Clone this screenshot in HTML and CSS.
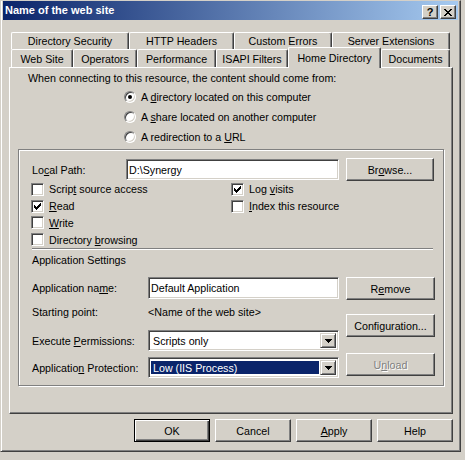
FILE: index.html
```html
<!DOCTYPE html>
<html>
<head>
<meta charset="utf-8">
<title>Name of the web site</title>
<link rel="stylesheet" href="styles.css">
</head>
<body>
<div class="window">
  <div class="titlebar">
    <span class="title">Name of the web site</span>
    <div class="tbtns">
      <span class="tbtn help">?</span>
      <span class="tbtn close"><svg width="8" height="7" viewBox="0 0 8 7" shape-rendering="crispEdges"><path d="M0 0h2v1h1v1h2v-1h1v-1h2v1h-1v1h-1v1h-1v1h1v1h1v1h1v1h-2v-1h-1v-1h-2v1h-1v1h-2v-1h1v-1h1v-1h1v-1h-1v-1h-1v-1h-1z" fill="#000"/></svg></span>
    </div>
  </div>
  <div class="client">
    <div class="tabctl">
      <div class="tabrow r1">
        <div class="tab t-dirsec">Directory Security</div>
        <div class="tab t-http">HTTP Headers</div>
        <div class="tab t-errors">Custom Errors</div>
        <div class="tab t-ext">Server Extensions</div>
      </div>
      <div class="tabrow r2">
        <div class="tab t-site">Web Site</div>
        <div class="tab t-ops">Operators</div>
        <div class="tab t-perf">Performance</div>
        <div class="tab t-isapi">ISAPI Filters</div>
        <div class="tab t-home selected">Home Directory</div>
        <div class="tab t-docs">Documents</div>
      </div>
      <div class="panel">
        <div class="intro">When connecting to this resource, the content should come from:</div>
        <div class="radios">
          <div class="radio-row"><span class="radio on"></span><span>A <u>d</u>irectory located on this computer</span></div>
          <div class="radio-row"><span class="radio"></span><span>A <u>s</u>hare located on another computer</span></div>
          <div class="radio-row"><span class="radio"></span><span>A redirection to a <u>U</u>RL</span></div>
        </div>
        <div class="group">
          <div class="lp-row">
            <span class="lp-label">Lo<u>c</u>al Path:</span>
            <div class="field lp-field">D:\Synergy</div>
            <div class="btn browse">Br<u>o</u>wse...</div>
          </div>
          <div class="checks">
            <div class="chk-item"><span class="chk"></span><span>Scrip<u>t</u> source access</span></div>
            <div class="chk-item"><span class="chk"><svg width="13" height="13" viewBox="0 0 13 13" shape-rendering="crispEdges"><path d="M3 5H4V6H5V7H6V6H7V5H8V4H9V3H10V6H9V7H8V8H7V9H6V10H5V9H4V8H3Z" fill="#000"/></svg></span><span>Log <u>v</u>isits</span></div>
            <div class="chk-item"><span class="chk"><svg width="13" height="13" viewBox="0 0 13 13" shape-rendering="crispEdges"><path d="M3 5H4V6H5V7H6V6H7V5H8V4H9V3H10V6H9V7H8V8H7V9H6V10H5V9H4V8H3Z" fill="#000"/></svg></span><span><u>R</u>ead</span></div>
            <div class="chk-item"><span class="chk"></span><span><u>I</u>ndex this resource</span></div>
            <div class="chk-item"><span class="chk"></span><span><u>W</u>rite</span></div>
            <div class="chk-item"></div>
            <div class="chk-item"><span class="chk"></span><span>Directory <u>b</u>rowsing</span></div>
            <div class="chk-item"></div>
          </div>
          <div class="sep"></div>
          <div class="app-title">Application Settings</div>
          <div class="app">
            <div class="app-left">
              <div class="arow ra">
                <span class="alabel">Application na<u>m</u>e:</span>
                <div class="field afield">Default Application</div>
              </div>
              <div class="arow rb">
                <span class="alabel">Starting point:</span>
                <span class="aval">&lt;Name of the web site&gt;</span>
              </div>
              <div class="arow rc">
                <span class="alabel">Execute <u>P</u>ermissions:</span>
                <div class="field combo"><span class="cval">Scripts only</span><span class="dd"><svg width="7" height="4" viewBox="0 0 7 4" shape-rendering="crispEdges"><path d="M0 0h7v1h-1v1h-1v1h-1v1h-1v-1h-1v-1h-1v-1h-1z" fill="#000"/></svg></span></div>
              </div>
              <div class="arow rd">
                <span class="alabel">Applicatio<u>n</u> Protection:</span>
                <div class="field combo"><span class="cval sel">Low (IIS Process)</span><span class="dd"><svg width="7" height="4" viewBox="0 0 7 4" shape-rendering="crispEdges"><path d="M0 0h7v1h-1v1h-1v1h-1v1h-1v-1h-1v-1h-1v-1h-1z" fill="#000"/></svg></span></div>
              </div>
            </div>
            <div class="app-right">
              <div class="btn abtn">R<u>e</u>move</div>
              <div class="btn abtn config">Configuration...</div>
              <div class="btn abtn unload disabled">U<u>n</u>load</div>
            </div>
          </div>
        </div>
      </div>
      <div class="buttons">
        <div class="btn dlg default">OK</div>
        <div class="btn dlg">Cancel</div>
        <div class="btn dlg"><u>A</u>pply</div>
        <div class="btn dlg">Help</div>
      </div>
    </div>
  </div>
</div>
</body>
</html>
```
FILE: styles.css
```css
* { box-sizing: border-box; }

body {
  margin: 0;
  background: #d4d0c8;
  font: 10.7px "Liberation Sans", Arial, sans-serif;
  color: #000;
}

u { text-underline-offset: 1px; }

.window {
  width: 461px;
  height: 452px;
  border-style: solid;
  border-width: 1px;
  border-color: #d4d0c8 #404040 #404040 #d4d0c8;
  box-shadow: inset 1px 0 #fff, inset -1px -1px #808080;
  padding: 0 2px;
  background: #d4d0c8;
}

.titlebar {
  height: 19px;
  display: flex;
  justify-content: space-between;
  align-items: flex-start;
  background: linear-gradient(to right, #0a246a, #a6caf0);
  color: #fff;
  font-weight: bold;
  font-size: 11px;
}

.title {
  padding-left: 2px;
  line-height: 19px;
}

.tbtns {
  display: flex;
  gap: 2px;
  margin-top: 4px;
  margin-right: 2px;
}

.tbtn {
  width: 16px;
  height: 14px;
  background: #d4d0c8;
  border: 1px solid;
  border-color: #fff #404040 #404040 #fff;
  box-shadow: inset -1px -1px #808080;
  display: flex;
  align-items: center;
  justify-content: center;
  color: #000;
  font-weight: bold;
  font-size: 11px;
  line-height: 1;
}

.tbtn svg { display: block; }

.client {
  padding: 12px 0 0 6px;
}

.tabctl { width: 444px; }

.tabrow {
  display: flex;
  padding-left: 2px;
}

.r1 { height: 17px; }
.r2 { height: 18px; }

.tab {
  height: 100%;
  background: #d4d0c8;
  border-top: 1px solid #fff;
  border-left: 1px solid #fff;
  border-right: 1px solid #404040;
  box-shadow: inset -1px 0 #808080;
  border-radius: 2px 2px 0 0;
  display: flex;
  align-items: center;
  justify-content: center;
  white-space: nowrap;
}

.r2 .tab { padding-top: 1px; }

.t-dirsec { width: 118px; }
.t-http { width: 105px; }
.t-errors { width: 98px; }
.t-ext { width: 118px; }

.t-site { width: 62px; }
.t-ops { width: 64px; }
.t-perf { width: 79px; }
.t-isapi { width: 72px; }
.t-home { width: 93px; }
.t-docs { width: 69px; }

.r2 .tab.selected {
  height: 21px;
  margin-top: -2px;
  padding-top: 0;
  padding-bottom: 1px;
  position: relative;
  z-index: 2;
}

.panel {
  height: 347px;
  border: 1px solid;
  border-color: #fff #404040 #404040 #fff;
  box-shadow: inset -1px -1px #808080;
  padding-top: 4px;
}

.intro {
  margin-left: 18px;
  line-height: 13px;
}

.radios {
  margin-top: 2px;
  padding-left: 114px;
}

.radio-row {
  height: 20px;
  display: flex;
  align-items: center;
}

.radio {
  width: 12px;
  height: 12px;
  margin-right: 5px;
  border-radius: 50%;
  background: #fff;
  border: 1px solid;
  border-color: #808080 #fff #fff #808080;
  box-shadow: inset 1px 1px #404040, inset -1px -1px #d4d0c8;
  display: flex;
  align-items: center;
  justify-content: center;
}

.radio.on::after {
  content: "";
  width: 4px;
  height: 4px;
  border-radius: 50%;
  background: #000;
}

.group {
  margin: 2px 0 0 8px;
  width: 426px;
  height: 237px;
  border: 1px solid #808080;
  box-shadow: inset 1px 1px #fff, 1px 1px #fff;
  padding: 8px 0 0 12px;
}

.lp-row {
  height: 23px;
  display: flex;
  align-items: center;
}

.lp-label {
  width: 94px;
  margin-left: 1px;
}

.field {
  background: #fff;
  border: 1px solid;
  border-color: #808080 #fff #fff #808080;
  box-shadow: inset 1px 1px #404040, inset -1px -1px #d4d0c8;
  padding-left: 2px;
  display: flex;
  align-items: center;
  white-space: nowrap;
}

.lp-field {
  width: 213px;
  height: 21px;
}

.btn {
  background: #d4d0c8;
  border: 1px solid;
  border-color: #fff #404040 #404040 #fff;
  box-shadow: inset -1px -1px #808080;
  display: flex;
  align-items: center;
  justify-content: center;
  white-space: nowrap;
}

.browse {
  width: 88px;
  height: 23px;
  margin-left: 7px;
}

.checks {
  display: grid;
  grid-template-columns: 200px auto;
  grid-auto-rows: 16.75px;
}

.chk-item {
  display: flex;
  align-items: center;
}

.chk {
  width: 13px;
  height: 13px;
  margin-right: 5px;
  background: #fff;
  border: 1px solid;
  border-color: #808080 #fff #fff #808080;
  box-shadow: inset 1px 1px #404040, inset -1px -1px #d4d0c8;
  position: relative;
}

.chk svg {
  position: absolute;
  left: -1px;
  top: -1px;
}

.sep {
  margin-left: 1px;
  width: 401px;
  height: 2px;
  border-top: 1px solid #808080;
  border-bottom: 1px solid #fff;
}

.app-title {
  margin: 4px 0 0 1px;
  line-height: 13px;
}

.app {
  display: flex;
  margin-top: 10px;
}

.app-left {
  width: 308px;
  margin-left: 1px;
}

.arow {
  display: flex;
  align-items: center;
}

.alabel { width: 116px; }

.ra { height: 22px; }
.rb { height: 26px; }
.rc { height: 21px; margin-top: 5px; }
.rd { height: 21px; margin-top: 6px; }

.afield {
  width: 191px;
  height: 22px;
}

.combo {
  width: 191px;
  height: 21px;
  padding: 2px;
  align-items: stretch;
}

.cval {
  flex: 1;
  display: flex;
  align-items: center;
  padding-left: 2px;
}

.cval.sel {
  margin: 1px 1px 1px 0;
  background: #0a246a;
  color: #fff;
}

.dd {
  width: 16px;
  background: #d4d0c8;
  border: 1px solid;
  border-color: #d4d0c8 #404040 #404040 #d4d0c8;
  box-shadow: inset 1px 1px #fff, inset -1px -1px #808080;
  display: flex;
  align-items: center;
  justify-content: center;
}

.dd svg { display: block; }

.app-right {
  margin-left: 6px;
}

.abtn {
  width: 89px;
  height: 23px;
}

.config { margin-top: 14px; }
.unload { margin-top: 16px; }

.disabled {
  color: #808080;
  text-shadow: 1px 1px #fff;
}

.buttons {
  display: flex;
  justify-content: flex-end;
  gap: 5px;
  margin-top: 5px;
}

.dlg {
  width: 76px;
  height: 23px;
}

.default {
  border: 1px solid #000;
  box-shadow: inset 1px 1px #fff, inset -1px -1px #404040, inset -2px -2px #808080;
}
```
